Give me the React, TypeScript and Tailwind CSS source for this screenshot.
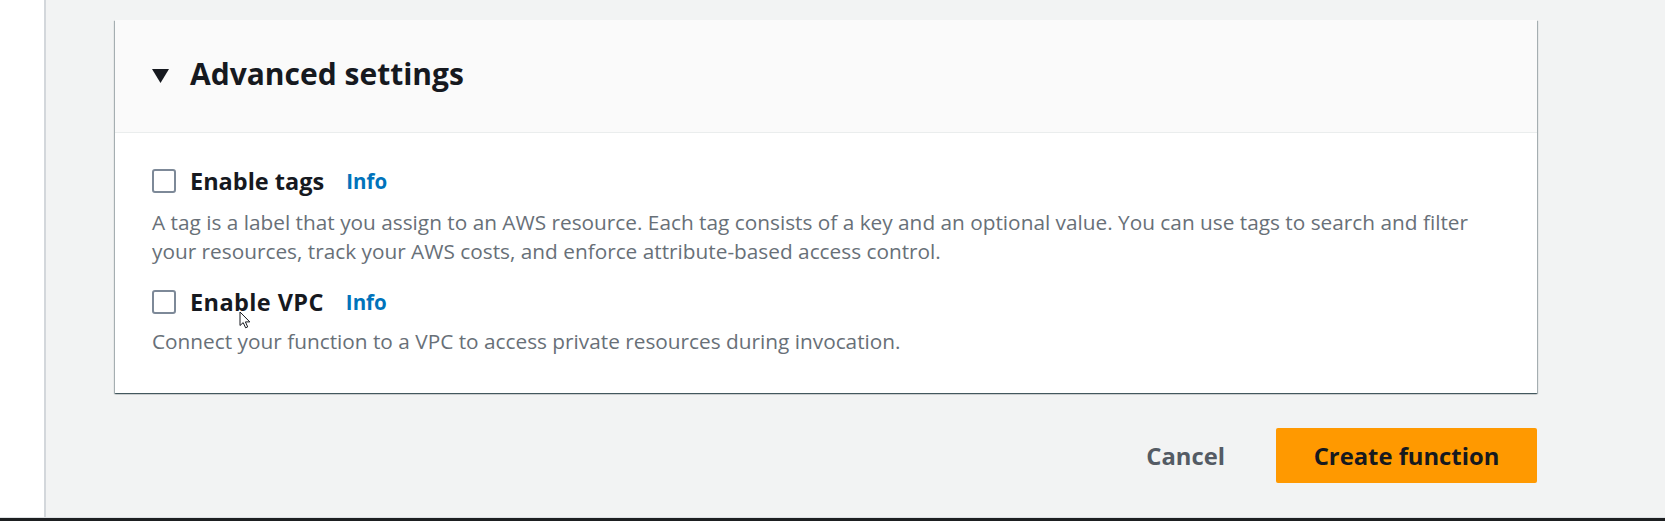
import React from "react";

function Checkbox() {
  return <div className="h-[24px] w-[24px] shrink-0 rounded-[3px] border-2 border-[#7d8998] bg-white" />;
}

function Cursor() {
  return (
    <svg
      className="pointer-events-none absolute left-[49px] top-[23px]"
      width="13"
      height="18"
      viewBox="0 0 13 18"
    >
      <path
        d="M1 1 L1 14.5 L4.2 11.6 L6.6 16.8 L8.7 15.9 L6.4 10.9 L10.8 10.9 Z"
        fill="#ffffff"
        stroke="#16191f"
        strokeWidth="1"
        strokeLinejoin="round"
      />
    </svg>
  );
}

export default function App() {
  return (
    <div
      className="flex h-[521px] w-full flex-col overflow-hidden bg-white"
      style={{ fontFamily: '"Open Sans", "Noto Sans", sans-serif' }}
    >
      <div className="flex min-h-0 flex-1">
        <div className="w-[46px] shrink-0 border-r-2 border-[#d3d7db] bg-white" />
        <main className="flex-1 bg-[#f2f3f3] pl-[69px] pr-[128px] pt-[20px]">
          <section className="bg-white shadow-[0_1px_1px_0_rgba(0,28,36,0.5),1px_1px_1px_0_rgba(0,28,36,0.25),-1px_1px_1px_0_rgba(0,28,36,0.25)]">
            <div className="flex items-center gap-[21px] border-b border-[#eaeded] bg-[#fafafa] pb-[40px] pl-[37px] pt-[36px]">
              <svg width="17" height="14" viewBox="0 0 17 14" className="mt-[4px] shrink-0">
                <polygon points="0,0 17,0 8.5,14" fill="#16191f" />
              </svg>
              <h2 className="text-[30px] font-bold leading-[36px] text-[#16191f]">Advanced settings</h2>
            </div>
            <div className="pb-[37px] pl-[37px] pr-[37px] pt-[34px]">
              <div className="flex items-center gap-[14px]">
                <Checkbox />
                <span className="text-[23.5px] font-bold leading-[28px] text-[#16191f]">Enable tags</span>
                <a className="ml-[8px] text-[20.5px] font-bold leading-[28px] text-[#0073bb]">Info</a>
              </div>
              <p className="mt-[13px] text-[20.8px] leading-[29px] text-[#687078]">
                A tag is a label that you assign to an AWS resource. Each tag consists of a key and an optional value. You
                can use tags to search and filter your resources, track your AWS costs, and enforce attribute-based access
                control.
              </p>
              <div className="mt-[22px] flex items-center gap-[14px]">
                <Checkbox />
                <span className="relative text-[23.5px] font-bold leading-[28px] tracking-[0.4px] text-[#16191f]">
                  Enable VPC
                  <Cursor />
                </span>
                <a className="ml-[8px] text-[20.5px] font-bold leading-[28px] text-[#0073bb]">Info</a>
              </div>
              <p className="mt-[11px] text-[20.8px] leading-[29px] text-[#687078]">
                Connect your function to a VPC to access private resources during invocation.
              </p>
            </div>
          </section>
          <div className="mt-[35px] flex items-center justify-end gap-[51px]">
            <button className="text-[23.8px] font-bold leading-[28px] text-[#545b64]">Cancel</button>
            <button className="flex h-[55px] w-[261px] items-center justify-center rounded-[2px] bg-[#ff9900] text-[23.8px] font-bold leading-[28px] text-[#16191f]">
              Create function
            </button>
          </div>
        </main>
      </div>
      <div className="h-px shrink-0 bg-[#dfe2e5]" />
      <div className="h-[3px] shrink-0 bg-[#1d1f21]" />
    </div>
  );
}
